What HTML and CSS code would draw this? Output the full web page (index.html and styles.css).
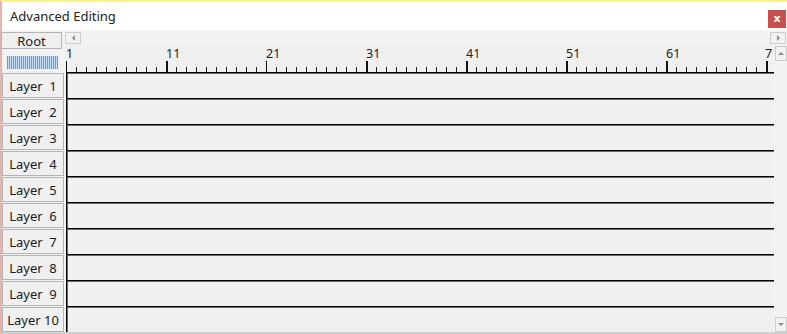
FILE: index.html
```html
<!DOCTYPE html>
<html lang="en">
<head>
    <meta charset="UTF-8">
    <title>Advanced Editing</title>
    <link rel="stylesheet" href="styles.css">
</head>
<body>

<div class="window">
    <!-- Title bar -->
    <div class="titlebar">
        <span class="title">Advanced Editing</span>
        <button class="close">x</button>
    </div>

    <!-- Editor grid -->
    <div class="editor">
        <div class="corner">
            <button class="root-btn">Root</button>
            <div class="level-bar"></div>
        </div>

        <div class="hscroll">
            <button class="arrow arrow-left"><span class="tri tri-left"></span></button>
            <div class="hscroll-track"></div>
            <button class="arrow arrow-right"><span class="tri tri-right"></span></button>
        </div>

        <div class="ruler">
            <div class="ruler-labels">
                <span>1</span><span>11</span><span>21</span><span>31</span><span>41</span><span>51</span><span>61</span><span class="last">7</span>
            </div>
            <div class="ruler-ticks"></div>
        </div>

        <div class="vscroll">
            <button class="varrow"><span class="tri tri-up"></span></button>
            <div class="vscroll-track"></div>
            <button class="varrow"><span class="tri tri-down"></span></button>
        </div>

        <!-- Layers -->
        <button class="layer-btn">Layer  1</button><div class="track"></div>
        <button class="layer-btn">Layer  2</button><div class="track"></div>
        <button class="layer-btn">Layer  3</button><div class="track"></div>
        <button class="layer-btn">Layer  4</button><div class="track"></div>
        <button class="layer-btn">Layer  5</button><div class="track"></div>
        <button class="layer-btn">Layer  6</button><div class="track"></div>
        <button class="layer-btn">Layer  7</button><div class="track"></div>
        <button class="layer-btn">Layer  8</button><div class="track"></div>
        <button class="layer-btn">Layer  9</button><div class="track"></div>
        <button class="layer-btn">Layer 10</button><div class="track"></div>
    </div>
</div>

</body>
</html>
```

FILE: styles.css
```css
body {
    margin: 0;
    padding: 0;
    font-family: "Noto Sans", "Open Sans", sans-serif;
    color: #1a1a1a;
    overflow: hidden;
}
.window {
    width: 787px;
    height: 334px;
    box-sizing: border-box;
    border-top: 2px solid #f7ef94;
    border-left: 2px solid #e4b5ae;
    background: #fff;
}
.titlebar {
    height: 28px;
    display: flex;
    align-items: center;
    justify-content: space-between;
    background: #fff;
}
.title {
    font-size: 13px;
    margin-left: 8px;
    margin-top: -1px;
    color: #222;
}
.close {
    width: 18px;
    height: 18px;
    margin-right: 1px;
    margin-top: 6px;
    border: none;
    padding: 0;
    background: #c94f4f;
    color: #fff;
    font-family: "DejaVu Sans", sans-serif;
    font-size: 11px;
    font-weight: bold;
    line-height: 16px;
}

/* dithered background behind the editor */
.editor {
    display: grid;
    grid-template-columns: 63px 709px 13px;
    grid-template-rows: 14px 28px repeat(10, 26px);
    border-bottom: 2px solid #cfcfcf;
    background: repeating-conic-gradient(#ececec 0 25%, #fafafa 0 50%) 0 0 / 2px 2px;
}
.corner {
    grid-row: 1 / 3;
    display: flex;
    flex-direction: column;
    align-items: flex-start;
}
.root-btn {
    width: 61px;
    height: 17px;
    margin-top: 2px;
    margin-left: -1px;
    padding: 0;
    border: 1px solid #b4b4b4;
    background: #f0f0f0;
    font-family: inherit;
    font-size: 13px;
    line-height: 14px;
    color: #222;
}
.level-bar {
    width: 51px;
    height: 13px;
    margin-top: 7px;
    margin-left: 5px;
    background: repeating-linear-gradient(90deg, #5c9ee0 0 1px, #c6ddf3 1px 2px);
}

.hscroll {
    grid-column: 2 / 4;
    display: flex;
    align-items: flex-start;
    padding-top: 2px;
}
.hscroll-track {
    flex: 1;
}
.arrow {
    width: 16px;
    height: 12px;
    padding: 0;
    border: 1px solid #cdcdcd;
    background: #f2f2f2;
    display: flex;
    align-items: center;
    justify-content: center;
}
.arrow-right {
    margin-right: 1px;
}
.tri {
    width: 0;
    height: 0;
    border: 3px solid transparent;
}
.tri-left {
    border-right: 3px solid #8a8a8a;
    border-left-width: 0;
}
.tri-right {
    border-left: 3px solid #8a8a8a;
    border-right-width: 0;
}
.tri-up {
    border-bottom: 3px solid #8a8a8a;
    border-top-width: 0;
}
.tri-down {
    border-top: 3px solid #8a8a8a;
    border-bottom-width: 0;
}

.ruler {
    background: #f0f0f0;
    display: flex;
    flex-direction: column;
    justify-content: flex-end;
    overflow: hidden;
}
.ruler-labels {
    display: flex;
    padding-left: 1px;
    font-size: 12.5px;
    line-height: 14px;
    color: #222;
    white-space: nowrap;
}
.ruler-labels span {
    flex: 0 0 100px;
}
.ruler-labels .last {
    flex: 0 0 8px;
    margin-left: -1px;
}
.ruler-ticks {
    height: 11px;
    margin-left: 1px;
    background:
        repeating-linear-gradient(90deg, #111 0 1.5px, transparent 1.5px 100px) 0 0 / 100% 11px no-repeat,
        repeating-linear-gradient(90deg, #222 0 1.2px, transparent 1.2px 10px) 0 100% / 100% 5px no-repeat;
}

.vscroll {
    grid-column: 3;
    grid-row: 2 / 13;
    display: flex;
    flex-direction: column;
    align-items: flex-end;
}
.vscroll-track {
    flex: 1;
}
.varrow {
    width: 12px;
    height: 15px;
    padding: 0;
    border: 1px solid #cdcdcd;
    background: #f2f2f2;
    display: flex;
    align-items: center;
    justify-content: center;
}
.varrow:first-child {
    margin-top: 2px;
}

.layer-btn {
    width: 62px;
    height: 25px;
    margin-top: 1px;
    padding: 0;
    border: 1px solid #b4b4b4;
    background: #f0f0f0;
    font-family: inherit;
    font-size: 13px;
    color: #1a1a1a;
    white-space: pre;
}
.track {
    background: #f0f0f0;
    border-top: 1px solid #000;
    border-left: 1px solid #000;
    margin-left: 1px;
    box-shadow: inset 0 1px 0 #6a6a6a, inset 1px 0 0 #6a6a6a;
}
```
